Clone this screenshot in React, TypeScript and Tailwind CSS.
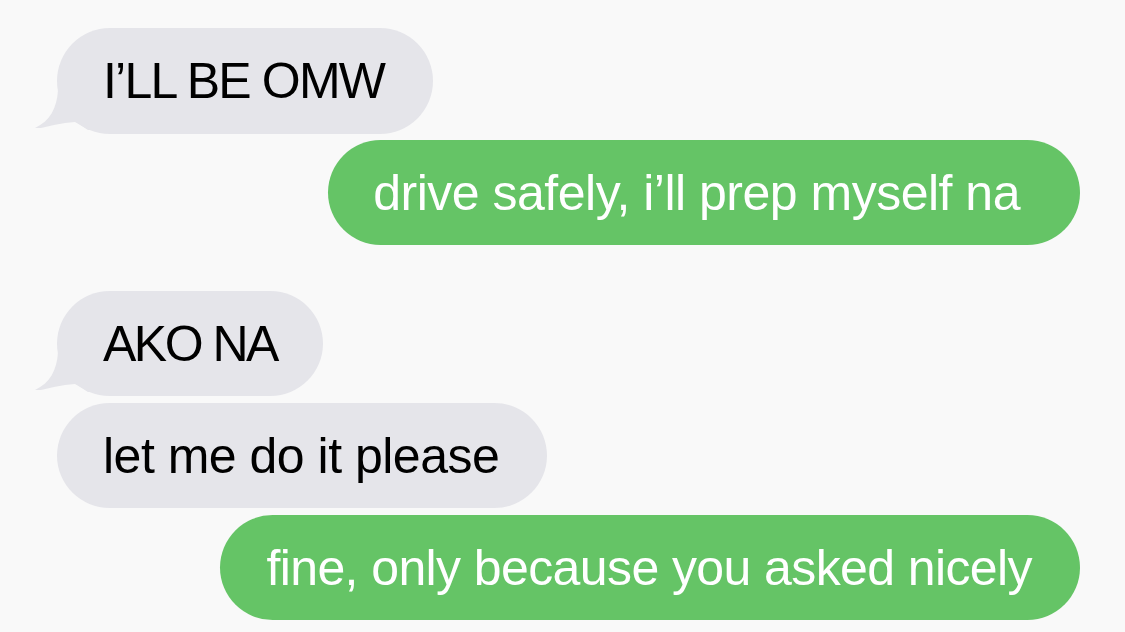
import React from 'react';

type Msg = { id: number; text: string; mine: boolean; tail?: boolean; wrap: string; bubble: string };

const MESSAGES: Msg[] = [
  {
    id: 1,
    text: 'I\u2019LL BE OMW',
    mine: false,
    tail: true,
    wrap: 'mt-[28px]',
    bubble: 'h-[106px] pl-[46px] pr-[49px] tracking-[-1.8px]',
  },
  {
    id: 2,
    text: 'drive safely, i\u2019ll prep myself na',
    mine: true,
    wrap: 'mt-[6px]',
    bubble: 'h-[105px] pl-[45px] pr-[60px] tracking-[-0.5px]',
  },
  {
    id: 3,
    text: 'AKO NA',
    mine: false,
    tail: true,
    wrap: 'mt-[46px]',
    bubble: 'h-[105px] pl-[46px] pr-[46px] tracking-[-2.5px]',
  },
  {
    id: 4,
    text: 'let me do it please',
    mine: false,
    wrap: 'mt-[7px]',
    bubble: 'h-[105px] pl-[46px] pr-[48px] tracking-[-0.5px]',
  },
  {
    id: 5,
    text: 'fine, only because you asked nicely',
    mine: true,
    wrap: 'mt-[7px]',
    bubble: 'h-[105px] pl-[46px] pr-[48px] tracking-[-0.6px]',
  },
];

// little hook on the bottom-left of incoming bubbles
const Tail = () => (
  <svg
    className="absolute left-[-25px] bottom-0"
    width="75"
    height="50"
    viewBox="0 0 75 50"
  >
    <path
      d="M26 6 C25 24 18 37 3 44 L9 44 L22 41 L33 39 L43 38 L50 42 L56 46 L75 46 L75 6 Z"
      fill="#e5e5ea"
    />
  </svg>
);

const Bubble = ({ msg }: { msg: Msg }) => (
  <div className={`flex ${msg.mine ? 'justify-end' : 'justify-start'} ${msg.wrap}`}>
    <div
      className={`relative flex items-center rounded-[53px] text-[50px] leading-none ${msg.bubble} ${
        msg.mine ? 'bg-[#65c466] text-white' : 'bg-[#e5e5ea] text-black'
      }`}
    >
      {msg.tail && <Tail />}
      <span className="relative whitespace-nowrap">{msg.text}</span>
    </div>
  </div>
);

const App: React.FC = () => {
  return (
    <div
      className="w-[1125px] h-[632px] overflow-hidden bg-[#f9f9f9] pl-[57px] pr-[45px]"
      style={{ fontFamily: '"Liberation Sans", Arial, sans-serif' }}
    >
      {MESSAGES.map((m) => (
        <Bubble key={m.id} msg={m} />
      ))}
    </div>
  );
};

export default App;
